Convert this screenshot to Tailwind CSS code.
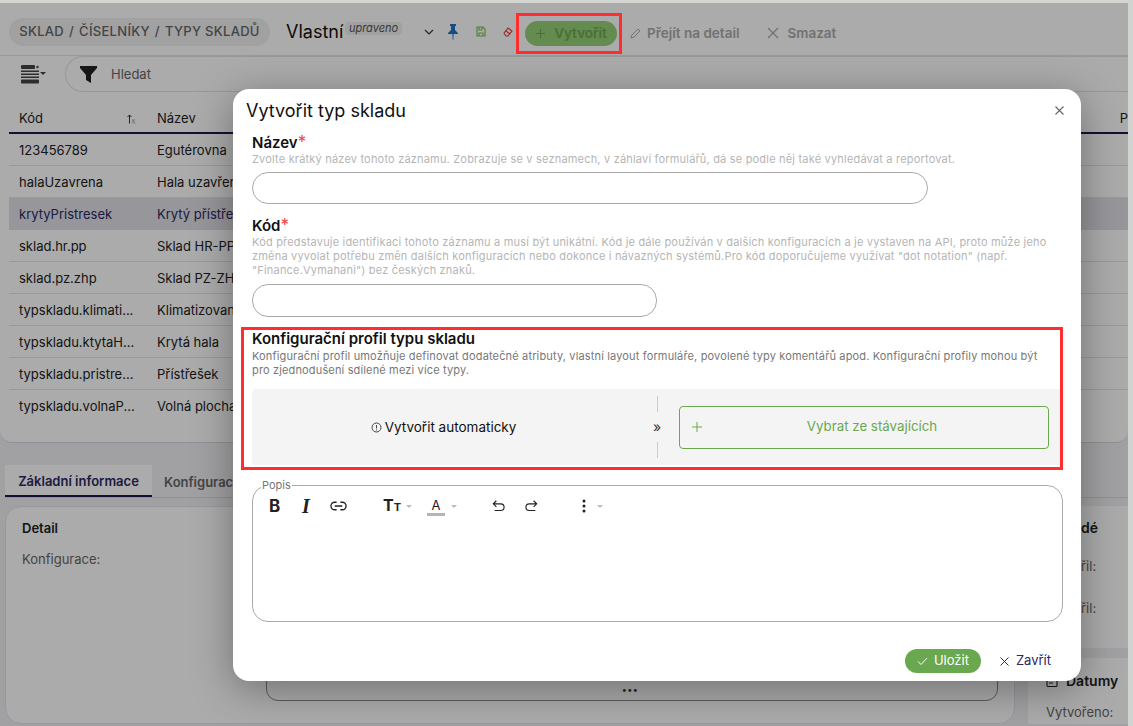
<!DOCTYPE html>
<html lang="cs">
<head>
  <meta charset="UTF-8">
  <title>Typy skladů</title>
  <script src="https://cdn.jsdelivr.net/npm/@tailwindcss/browser@4"></script>
</head>
<body class="relative h-[726px] w-[1133px] overflow-hidden bg-white font-['Inter',sans-serif] text-[#222]">

  <!-- page under the dialog -->
  <div class="h-[726px] pt-[3px] pr-[5px] bg-[#f1f1f3]">
    <section class="h-[440px] bg-white rounded-b-xl border-b border-[#d5d8de]">
      <div class="h-[53px] flex items-center pl-[9px] pt-[5px] border-b border-[#e4e4e4]">
        <div class="shrink-0 h-[28px] w-[261px] flex items-center justify-center gap-[5px] rounded-full bg-[#f0f0f0] text-[13px] font-medium text-[#666] tracking-[0.3px] whitespace-nowrap">
          <span>SKLAD</span><span>/</span><span>ČÍSELNÍKY</span><span>/</span><span>TYPY SKLADŮ</span>
        </div>
        <span class="shrink-0 ml-[16px] w-[53px] text-[18px] text-[#111]">Vlastní</span>
        <span class="shrink-0 ml-[6px] mb-[6px] w-[57px] text-center rounded bg-[#f0f0f0] text-[11px] leading-[13px] italic text-[#555]">upraveno</span>
        <svg class="shrink-0 ml-[21px]" width="12" height="12" viewBox="0 0 12 12" fill="none" stroke="#333" stroke-width="1.200"><path d="M2 4l4 4 4-4"/></svg>
        <svg class="shrink-0 ml-[12px]" width="12" height="16" viewBox="0 0 12 16" fill="#1976c9"><path d="M3 0h6v2H8v4l3 3v1H1V9l3-3V2H3zM5.400 10h1.200l-.3 6h-.6z"/></svg>
        <svg class="shrink-0 ml-[17px]" width="10" height="11" viewBox="0 0 10 11" fill="none" stroke="#7cc25a" stroke-width="1.200"><path d="M1 1h6l2 2v7H1zM3 1v3h3V1M3 10V7h4v3"/></svg>
        <svg class="shrink-0 ml-[17px]" width="10" height="10" viewBox="0 0 10 10" fill="none" stroke="#e83a3a" stroke-width="1.100"><path d="M1 6l4-5 4 3-4 5H3zM3 4l4 3"/></svg>
        <button class="shrink-0 ml-[12px] mt-[3px] w-[92px] h-[25px] rounded-full bg-[#96cf78] text-[13.5px] font-semibold flex items-center justify-center gap-[8px]">
          <svg width="11" height="11" viewBox="0 0 11 11" stroke="#6aa84f" stroke-width="1.100"><path d="M5.500 1v9M1 5.500h9"/></svg>
          <span class="text-[#6aa84f]">Vytvořit</span>
        </button>
        <div class="shrink-0 ml-[13px] mt-[3px] flex items-center gap-[6px] text-[13.5px] font-semibold text-[#aaa]">
          <svg width="11" height="11" viewBox="0 0 11 11" fill="none" stroke="#aaa" stroke-width="1"><path d="M1 10l.6-2.600L8 1l2 2-6.400 6.400z"/></svg>
          <span>Přejít na detail</span>
        </div>
        <div class="shrink-0 ml-[28px] mt-[3px] flex items-center gap-[8px] text-[13.5px] font-semibold text-[#aaa]">
          <svg width="12" height="12" viewBox="0 0 12 12" stroke="#aaa" stroke-width="1.300"><path d="M1 1l10 10M11 1L1 11"/></svg>
          <span>Smazat</span>
        </div>
      </div>

      <div class="h-[36px] flex items-center pl-[21px]">
        <svg width="25" height="19" viewBox="0 0 25 19" fill="#444"><rect width="14" height="4" rx="1"/><rect y="5.500" width="18" height="1.500"/><rect y="8.500" width="18" height="1.500"/><rect y="11.500" width="18" height="1.500"/><rect y="14.500" width="18" height="4" rx="1"/><circle cx="16.500" cy="2" r="1.200"/><path d="M19 7h6l-3 3z"/></svg>
        <div class="ml-[19px] flex-1 h-[36px] rounded-l-full border-y border-l border-[#e2e2e2] flex items-center pl-[14px]">
          <svg width="17" height="17" viewBox="0 0 17 17" fill="#222"><path d="M0 0h17v2l-6 7v8l-5-3V9L0 2z"/></svg>
          <span class="ml-[14px] mt-[2px] text-[13px] text-[#666]">Hledat</span>
        </div>
      </div>

      <div class="mt-[7px] ml-[9px] text-[13px]">
        <div class="h-[35px] flex items-center border-b-2 border-[#1c1a4d] pt-[6px]">
          <span class="w-[118px] pl-[10px]">Kód</span>
          <span class="w-[30px]">
            <svg width="9" height="10" viewBox="0 0 9 10" fill="none" stroke="#333" stroke-width="1"><path d="M2.500 9.500V1M.5 3l2-2 2 2"/><path d="M6 5v4.500M6 7.500l2-2M6.500 7.500l2 2" stroke="#888" stroke-width="0.700"/></svg>
          </span>
          <span>Název</span>
          <span class="ml-auto">P</span>
        </div>
        <div class="h-[32px] pt-[2px] flex items-center border-b border-[#e4e4e4]"><span class="w-[148px] pl-[10px]">123456789</span><span>Egutérovna</span></div>
        <div class="h-[32px] pt-[2px] flex items-center border-b border-[#e4e4e4]"><span class="w-[148px] pl-[10px]">halaUzavrena</span><span>Hala uzavřená</span></div>
        <div class="h-[32px] pt-[2px] flex items-center bg-[#e1e1e8] text-[#2b2963]"><span class="w-[148px] pl-[10px]">krytyPristresek</span><span>Krytý přístřešek</span></div>
        <div class="h-[32px] pt-[2px] flex items-center border-b border-[#e4e4e4]"><span class="w-[148px] pl-[10px]">sklad.hr.pp</span><span>Sklad HR-PP</span></div>
        <div class="h-[32px] pt-[2px] flex items-center border-b border-[#e4e4e4]"><span class="w-[148px] pl-[10px]">sklad.pz.zhp</span><span>Sklad PZ-ZHP</span></div>
        <div class="h-[32px] pt-[2px] flex items-center border-b border-[#e4e4e4]"><span class="w-[148px] pl-[10px]">typskladu.klimati...</span><span>Klimatizovaná hala</span></div>
        <div class="h-[32px] pt-[2px] flex items-center border-b border-[#e4e4e4]"><span class="w-[148px] pl-[10px]">typskladu.ktytaH...</span><span>Krytá hala</span></div>
        <div class="h-[32px] pt-[2px] flex items-center border-b border-[#e4e4e4]"><span class="w-[148px] pl-[10px]">typskladu.pristre...</span><span>Přístřešek</span></div>
        <div class="h-[32px] pt-[2px] flex items-center"><span class="w-[148px] pl-[10px]">typskladu.volnaP...</span><span>Volná plocha</span></div>
      </div>
    </section>

    <div class="mt-[22px] ml-[5px] h-[33px] flex items-stretch border-b border-[#d8d8d8] text-[13px] font-semibold">
      <div class="w-[147px] pt-[3px] flex items-center justify-center bg-white border-b-2 border-[#1c1a4d] text-[#2b2963]">Základní informace</div>
      <div class="ml-[12px] pt-[3px] flex items-center text-[#666]">Konfigurace</div>
    </div>

    <div class="mt-[8px] ml-[5px] flex gap-[13px]">
      <div class="relative shrink-0 w-[1010px] h-[218px] rounded-2xl bg-white border border-[#e2e5ea] pl-[16px] pt-[12px]">
        <div class="text-[13px] font-semibold">Detail</div>
        <div class="mt-[11px] text-[13px] text-[#666]">Konfigurace:</div>
        <div class="absolute left-[260px] top-[143px] w-[732px] h-[51px] rounded-xl border border-[#888] flex items-end justify-center pb-[3px] pr-[4px] text-[9px] leading-[14px] tracking-[0.5px] text-[#333]">•••</div>
      </div>
      <div class="flex-1 flex flex-col gap-[10px]">
        <div class="h-[142px] rounded-l-2xl bg-white pl-[53px] pt-[12px] text-[13px] text-[#666]">
          <div class="text-[14px] leading-[20px] font-semibold text-[#222]">dé</div>
          <div class="mt-[18px] leading-[20px]">řil:</div>
          <div class="mt-[22px] leading-[20px]">řil:</div>
        </div>
        <div class="h-[66px] bg-white pl-[18px] pt-[13px]">
          <div class="flex items-center gap-[8px] text-[14px] leading-[20px] font-semibold">
            <svg width="12" height="12" viewBox="0 0 12 12" fill="none" stroke="#222" stroke-width="1.100"><rect x="1" y="1.500" width="10" height="10" rx="1"/><path d="M3 5h6M3 8h4"/></svg>
            <span>Datumy</span>
          </div>
          <div class="mt-[12px] text-[13px] text-[#666]">Vytvořeno:</div>
        </div>
      </div>
    </div>
  </div>

  <!-- overlay, and the strips of the capture that it does not cover -->
  <div class="absolute inset-0 bg-black/33"></div>
  <div class="absolute left-0 top-0 w-full h-[3px] bg-[#d4d4d0]"></div>
  <div class="absolute right-0 top-0 w-[5px] h-full bg-[#cfd4d0]"></div>

  <!-- red marker round the create button -->
  <div class="absolute left-[516px] top-[13px] w-[106px] h-[41px] border-[3px] border-[#ff2d2d]"></div>

  <!-- dialog -->
  <div class="absolute left-[233px] top-[89px] w-[848px] h-[592px] rounded-2xl bg-white shadow-[0_8px_40px_rgba(0,0,0,0.35)] px-[19px] pt-[10px]">
    <div class="ml-[-6px] h-[24px] text-[18px] leading-[24px] text-[#111]">Vytvořit typ skladu</div>
    <svg class="absolute right-[17px] top-[17px]" width="9" height="9" viewBox="0 0 9 9" stroke="#666" stroke-width="1.100"><path d="M.5.500l8 8M8.500.500l-8 8"/></svg>

    <div class="mt-[10px] text-[15px] leading-[19px] font-semibold text-[#111]">Název<span class="text-[17px] leading-[0] text-[#ef4444] font-normal">*</span></div>
    <p class="text-[11px] leading-[14px] text-[#b5b5b5] tracking-[0.19px] whitespace-nowrap">Zvolte krátký název tohoto záznamu. Zobrazuje se v seznamech, v záhlaví formulářů, dá se podle něj také vyhledávat a reportovat.</p>
    <div class="mt-[6px] w-[676px] h-[32px] rounded-2xl border border-[#aaa]"></div>

    <div class="mt-[12px] text-[15px] leading-[19px] font-semibold text-[#111]">Kód<span class="text-[17px] leading-[0] text-[#ef4444] font-normal">*</span></div>
    <p class="text-[11px] leading-[14px] text-[#b5b5b5] tracking-[0.19px]">Kód představuje identifikaci tohoto záznamu a musí být unikátní. Kód je dále používán v dalších konfiguracích a je vystaven na API, proto může jeho změna vyvolat potřebu změn dalších konfiguracích nebo dokonce i návazných systémů.Pro kód doporučujeme využívat "dot notation" (např. "Finance.Vymahani") bez českých znaků.</p>
    <div class="mt-[7px] w-[405px] h-[33px] rounded-2xl border border-[#aaa]"></div>

    <div class="mt-[10px] ml-[-11px] w-[822px] h-[143px] border-[3px] border-[#ff2d2d] pl-[8px]">
      <div class="text-[15px] leading-[18px] font-semibold text-[#111]">Konfigurační profil typu skladu</div>
      <p class="mt-[1px] w-[800px] text-[11px] leading-[14px] text-[#777] tracking-[0.15px]">Konfigurační profil umožňuje definovat dodatečné atributy, vlastní layout formuláře, povolené typy komentářů apod. Konfigurační profily mohou být pro zjednodušení sdílené mezi více typy.</p>
      <div class="mt-[12px] w-[808px] h-[76px] rounded-l bg-[#f4f4f4] flex items-center">
        <div class="w-[383px] flex items-center justify-center gap-[3px] text-[13.5px] text-[#111]">
          <svg width="11" height="11" viewBox="0 0 11 11" fill="none" stroke="#333" stroke-width="0.900"><circle cx="5.500" cy="5.500" r="4.500"/><path d="M5.500 3v3.500M5.500 7.500v1"/></svg>
          <span>Vytvořit automaticky</span>
        </div>
        <div class="ml-[21px] w-[2px] h-[62px] flex flex-col items-center justify-between">
          <span class="w-px h-[16px] bg-[#ccc]"></span>
          <span class="text-[14px] leading-[14px] text-[#333]">»</span>
          <span class="w-px h-[16px] bg-[#ccc]"></span>
        </div>
        <div class="ml-[21px] w-[370px] h-[43px] rounded border border-[#6aa84f] flex items-center pl-[12px] text-[13.3px] text-[#6aa84f]">
          <svg width="10" height="10" viewBox="0 0 10 10" stroke="#6aa84f" stroke-width="1"><path d="M5 0v10M0 5h10"/></svg>
          <span class="flex-1 text-center pr-[6px]">Vybrat ze stávajících</span>
        </div>
      </div>
    </div>

    <fieldset class="mt-[9px] w-[811px] h-[143px] rounded-2xl border border-[#aaa] pl-[8px]">
      <legend class="px-[1px] text-[11px] leading-[12px] text-[#777]">Popis</legend>
      <div class="mt-[4px] ml-[8px] flex items-center text-[#222]">
        <span class="w-[12px] text-[17px] leading-[20px] font-bold">B</span>
        <span class="ml-[21px] w-[11px] text-[20px] leading-[20px] font-bold italic font-['Liberation_Serif',serif]">I</span>
        <svg class="ml-[17px]" width="17" height="12" viewBox="0 0 18 12" fill="none" stroke="#222" stroke-width="1.400"><path d="M7 2H5a4 4 0 000 8h2M11 2h2a4 4 0 010 8h-2M5 6h8"/></svg>
        <span class="ml-[36px] w-[16px] text-[16px] leading-[20px] font-bold whitespace-nowrap">T<span class="text-[11px]">T</span></span>
        <span class="ml-[7px] border-x-[3px] border-t-[3px] border-x-transparent border-t-[#bbb]"></span>
        <span class="ml-[15px] w-[18px] border-b-[3px] border-[#b5b5b5] text-center text-[13px] leading-[16px]">A</span>
        <span class="ml-[6px] border-x-[3px] border-t-[3px] border-x-transparent border-t-[#bbb]"></span>
        <svg class="ml-[35px]" width="14" height="14" viewBox="0 0 16 14" fill="none" stroke="#222" stroke-width="1.300"><path d="M5 1L1.500 4.500 5 8M2 4.500h8a3.800 3.800 0 010 7.600H3"/></svg>
        <svg class="ml-[18px]" width="14" height="14" viewBox="0 0 16 14" fill="none" stroke="#222" stroke-width="1.300"><path d="M11 1l3.500 3.500L11 8M14 4.500H6a3.800 3.800 0 000 7.600h7"/></svg>
        <svg class="ml-[44px]" width="4" height="14" viewBox="0 0 4 14" fill="#222"><circle cx="2" cy="2" r="1.500"/><circle cx="2" cy="7" r="1.500"/><circle cx="2" cy="12" r="1.500"/></svg>
        <span class="ml-[11px] border-x-[3px] border-t-[3px] border-x-transparent border-t-[#bbb]"></span>
      </div>
    </fieldset>

    <div class="mt-[27px] w-[799px] flex items-center justify-end text-[13px]">
      <button class="w-[76px] h-[24px] rounded-full bg-[#6aa84f] text-white flex items-center justify-center gap-[6px]">
        <svg width="11" height="9" viewBox="0 0 11 9" fill="none" stroke="#fff" stroke-width="1"><path d="M1 4.500l3 3L10 1"/></svg>
        <span>Uložit</span>
      </button>
      <div class="ml-[19px] flex items-center gap-[7px] text-[#2b2963]">
        <svg width="9" height="9" viewBox="0 0 9 9" stroke="#2b2963" stroke-width="1"><path d="M.5.500l8 8M8.500.500l-8 8"/></svg>
        <span>Zavřít</span>
      </div>
    </div>
  </div>
</body>
</html>
